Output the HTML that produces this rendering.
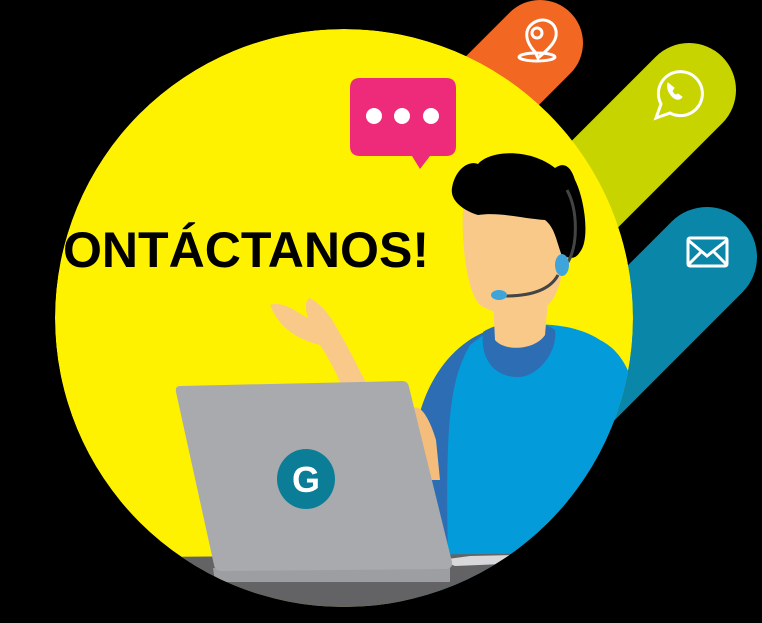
<!DOCTYPE html>
<html><head><meta charset="utf-8"><style>
html,body{margin:0;padding:0;background:#000;}
svg{display:block}
</style></head><body>
<svg width="762" height="623" viewBox="0 0 762 623" xmlns="http://www.w3.org/2000/svg">
<rect width="762" height="623" fill="#000"/>
<defs><clipPath id="c"><circle cx="344" cy="318" r="289"/></clipPath></defs>
<!-- ribbons -->
<line x1="540" y1="43" x2="380" y2="203" stroke="#f26722" stroke-width="86" stroke-linecap="round"/>
<line x1="689" y1="90" x2="470" y2="309" stroke="#c8d400" stroke-width="94" stroke-linecap="round"/>
<line x1="707" y1="257" x2="480" y2="484" stroke="#0a87a8" stroke-width="100" stroke-linecap="round"/>
<!-- icons -->
<g fill="none" stroke="#fff" stroke-width="3">
<path d="M535 52 C524 40 524 28 535 22 C546 16 558 24 556 36 C555 42 550 48 538 58 Z"/>
<circle cx="537" cy="33" r="5"/>
<ellipse cx="537" cy="57" rx="18" ry="4"/>
<path d="M656 118 L661 104 A22 22 0 1 1 670 113 Z"/>
<path d="M668 83 q-2 8 6 15 q5 3 8 -1 l-4 -3 q-3 3 -6 -3 l2 -3 z" fill="#fff" stroke-width="1"/>
<rect x="688" y="238" width="39" height="28" rx="2"/>
<path d="M688 240 L707 256 L727 240 M688 265 L701 252 M727 265 L714 252"/>
</g>
<g clip-path="url(#c)">
<circle cx="344" cy="318" r="289" fill="#fff200"/>
<!-- text -->
<text x="63" y="267" font-family="Liberation Sans, sans-serif" font-weight="bold" font-size="50" textLength="366" lengthAdjust="spacingAndGlyphs" fill="#000">ONTÁCTANOS!</text>
<!-- shirt -->
<path d="M418 420 C430 370 460 340 490 330 C520 322 570 320 600 340 C640 360 650 420 650 623 L420 623 Z" fill="#039bd9"/>
<path d="M418 420 C430 370 460 340 490 330 L470 345 C450 380 445 420 448 560 L420 560 Z" fill="#2c6db4"/>
<path d="M483 332 C500 320 540 318 555 330 C558 350 540 375 520 377 C495 378 480 360 483 332 Z" fill="#2c6db4"/>
<path d="M493 300 L495 340 C505 352 535 350 545 335 L548 300 Z" fill="#f9c98a"/>
<!-- arm -->
<path d="M270 305 C285 300 300 315 308 318 C305 308 305 300 310 298 C322 305 330 315 338 330 C350 350 360 372 370 390 L345 395 C340 380 330 360 320 345 C300 340 280 330 270 305 Z" fill="#f9c98a"/>
<path d="M410 410 C420 400 430 420 436 440 L440 480 L420 480 Z" fill="#f4bd7c"/>
<!-- face -->
<path d="M464 200 C470 180 540 180 560 210 C568 240 565 290 548 305 C530 318 500 318 480 305 C465 290 460 230 464 200 Z" fill="#f9c98a"/>
<!-- hair -->
<path d="M452 188 C455 170 468 160 478 164 C490 150 530 148 555 168 C566 160 572 170 575 180 C585 200 590 240 580 252 C575 260 570 258 562 256 C556 240 555 228 545 220 C520 218 500 212 478 215 C462 210 450 200 452 188 Z" fill="#000"/>
<!-- headset -->
<path d="M567 190 C578 210 578 245 568 262" stroke="#444" stroke-width="3" fill="none"/>
<ellipse cx="562" cy="265" rx="7" ry="11" fill="#3ea4d9"/>
<path d="M558 275 C550 290 530 296 505 296" stroke="#444" stroke-width="3" fill="none"/>
<ellipse cx="499" cy="295" rx="8" ry="5" fill="#3ea4d9"/>
<!-- laptop base -->
<path d="M150 557 L600 553 L600 623 L150 623 Z" fill="#636365"/>
<path d="M440 560 L470 556 L600 553 L600 560 L455 566 Z" fill="#d8d8da"/>
<path d="M213 568 L450 568 L450 582 L215 582 Z" fill="#9d9ea2"/>
<!-- laptop lid -->
<path d="M180 386 L402 381 Q408 381 409 387 L452 562 Q453 569 445 569 L222 571 Q215 571 214 565 L176 392 Q175 386 180 386 Z" fill="#a9aaae"/>
<ellipse cx="306" cy="479" rx="29" ry="30" fill="#0b7d96"/>
<text x="306" y="492" text-anchor="middle" font-family="Liberation Sans, sans-serif" font-weight="bold" font-size="36" fill="#fff">G</text>
</g>
<!-- chat bubble -->
<path d="M360 78 L446 78 Q456 78 456 88 L456 146 Q456 156 446 156 L430 156 L420 169 L412 156 L360 156 Q350 156 350 146 L350 88 Q350 78 360 78 Z" fill="#ee2a7b"/>
<circle cx="374" cy="116" r="8" fill="#fff"/>
<circle cx="402" cy="116" r="8" fill="#fff"/>
<circle cx="431" cy="116" r="8" fill="#fff"/>
</svg>
</body></html>
